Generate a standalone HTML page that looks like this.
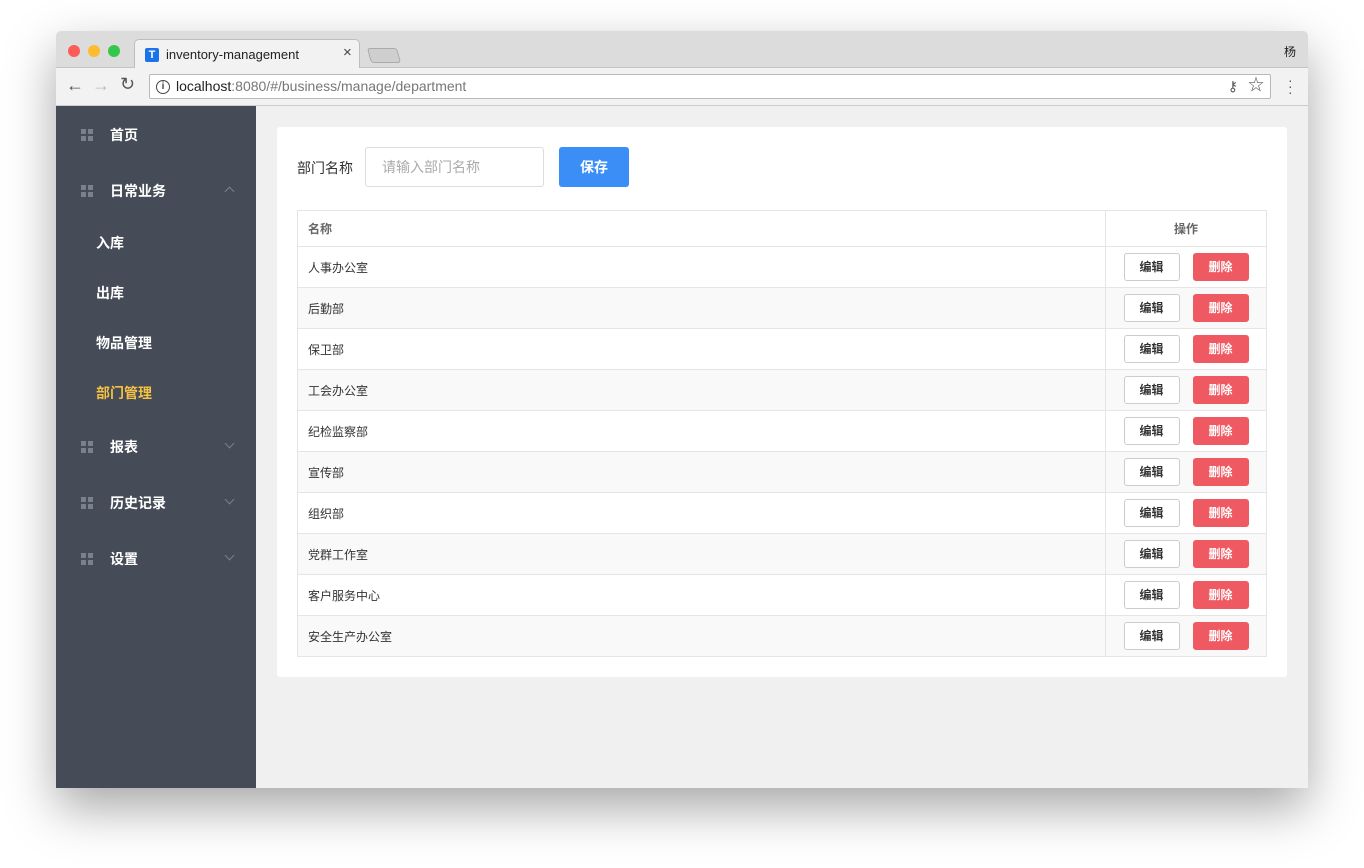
<!DOCTYPE html>
<html><head><meta charset="utf-8"><style>
*{margin:0;padding:0;box-sizing:border-box}
body{width:1364px;height:868px;background:#fff;font-family:"Liberation Sans","Noto Sans CJK SC",sans-serif;position:relative;overflow:hidden}
.win{position:absolute;left:56px;top:31px;width:1252px;height:757px;background:#f0f0f0;box-shadow:0 20px 50px rgba(0,0,0,.35);border-radius:5px 5px 0 0;overflow:hidden}
.title{position:absolute;left:0;top:0;width:100%;height:37px;background:#dcdcdc;border-bottom:1px solid #c4c4c4}
.dot{position:absolute;top:14px;width:12px;height:12px;border-radius:50%}
.tab{position:absolute;left:78px;top:8px;width:226px;height:30px;background:#f2f2f2;border:1px solid #bdbdbd;border-bottom:none;border-radius:5px 5px 0 0}
.tool{position:absolute;left:0;top:37px;width:100%;height:38px;background:#f2f2f2;border-bottom:1px solid #ccc}
.url{position:absolute;left:93px;top:6px;width:1122px;height:25px;background:#fff;border:1px solid #b8b8b8;border-radius:2px;font-size:14px;line-height:23px;padding-left:26px;color:#777}
.side{position:absolute;left:0;top:75px;width:200px;height:682px;background:#454c57}
.mi{position:absolute;left:0;width:200px;color:#fff;font-size:14px;font-weight:bold}
.ic{position:absolute;left:25px;width:12px;height:12px;background:
linear-gradient(#7b818a,#7b818a) 0 0/5px 5px no-repeat,linear-gradient(#7b818a,#7b818a) 7px 0/5px 5px no-repeat,linear-gradient(#7b818a,#7b818a) 0 7px/5px 5px no-repeat,linear-gradient(#7b818a,#7b818a) 7px 7px/5px 5px no-repeat}
.chev{position:absolute;left:170px;width:7px;height:7px;border-right:1px solid #7b818a;border-bottom:1px solid #7b818a}
.card{position:absolute;left:221px;top:96px;width:1010px;height:550px;background:#fff;border-radius:3px}
table{position:absolute;left:20px;top:83px;width:970px;border-collapse:collapse;font-size:12px;color:#333}
td{border:1px solid #e5e5e5;height:41px;padding-left:10px}
tr.h td{height:36px;color:#666;font-weight:bold}
tr:nth-child(odd):not(.h) td{background:#f9f9f9}
td.op{width:161px;padding:0;text-align:center}
.b{display:inline-block;width:56px;height:28px;line-height:26px;border-radius:3px;font-size:12px;font-weight:bold;vertical-align:middle}
.e{border:1px solid #ccc;background:#fff;color:#333;margin-right:13px}
.d{background:#ef5a62;color:#fff;border:1px solid #ef5a62}
</style></head><body>
<div class="win">
<div class="title">
<div class="dot" style="left:12px;background:#fc5b57"></div>
<div class="dot" style="left:32px;background:#fdbc2e"></div>
<div class="dot" style="left:52px;background:#34c84a"></div>
<div class="tab"></div>
<div style="position:absolute;left:89px;top:17px;width:14px;height:14px;background:#1a73e8;border-radius:2px;color:#fff;font-size:11px;font-weight:bold;text-align:center;line-height:14px">T</div>
<div style="position:absolute;left:110px;top:16px;font-size:13px;color:#222">inventory-management</div>
<div style="position:absolute;left:287px;top:13px;font-size:15px;color:#444">×</div>
<div style="position:absolute;left:313px;top:17px;width:30px;height:15px;background:#cfcfcf;border:1px solid #aaa;border-radius:3px;transform:skewX(15deg)"></div>
<div style="position:absolute;right:12px;top:12px;font-size:12px;color:#222">杨</div>
</div>
<div class="tool">
<div style="position:absolute;left:10px;top:7px;font-size:18px;color:#555">←</div>
<div style="position:absolute;left:36px;top:7px;font-size:18px;color:#bbb">→</div>
<div style="position:absolute;left:64px;top:6px;font-size:18px;color:#555">↻</div>
<div class="url"><span style="position:absolute;left:6px;top:5px;width:14px;height:14px;border:1.5px solid #444;border-radius:50%;font-size:10px;line-height:11px;text-align:center;color:#444;font-weight:bold">i</span><span style="color:#222">localhost</span>:8080/#/business/manage/department
<span style="position:absolute;right:32px;top:0;color:#555">⚷</span><span style="position:absolute;right:6px;top:-1px;color:#555;font-size:16px">☆</span></div>
<div style="position:absolute;left:1232px;top:9px;font-size:14px;color:#555;line-height:6px">·<br>·<br>·</div>
</div>
<div class="side">
<div class="mi" style="top:19px"><div class="ic" style="top:4px"></div><span style="position:absolute;left:54px">首页</span></div>
<div class="mi" style="top:75px"><div class="ic" style="top:4px"></div><span style="position:absolute;left:54px">日常业务</span><div class="chev" style="top:7px;transform:rotate(-135deg)"></div></div>
<div class="mi" style="top:127px"><span style="position:absolute;left:40px">入库</span></div>
<div class="mi" style="top:177px"><span style="position:absolute;left:40px">出库</span></div>
<div class="mi" style="top:227px"><span style="position:absolute;left:40px">物品管理</span></div>
<div class="mi" style="top:277px;color:#f5c143"><span style="position:absolute;left:40px">部门管理</span></div>
<div class="mi" style="top:331px"><div class="ic" style="top:4px"></div><span style="position:absolute;left:54px">报表</span><div class="chev" style="top:3px;transform:rotate(45deg)"></div></div>
<div class="mi" style="top:387px"><div class="ic" style="top:4px"></div><span style="position:absolute;left:54px">历史记录</span><div class="chev" style="top:3px;transform:rotate(45deg)"></div></div>
<div class="mi" style="top:443px"><div class="ic" style="top:4px"></div><span style="position:absolute;left:54px">设置</span><div class="chev" style="top:3px;transform:rotate(45deg)"></div></div>
</div>
<div class="card">
<div style="position:absolute;left:20px;top:31px;font-size:14px;color:#333">部门名称</div>
<div style="position:absolute;left:88px;top:20px;width:179px;height:40px;border:1px solid #ddd;border-radius:3px;font-size:14px;color:#aaa;line-height:38px;padding-left:16px">请输入部门名称</div>
<div style="position:absolute;left:282px;top:20px;width:70px;height:40px;background:#3a8ef6;border-radius:3px;color:#fff;font-size:14px;font-weight:bold;text-align:center;line-height:40px">保存</div>
<table>
<tr class="h"><td>名称</td><td class="op">操作</td></tr>
<tr><td>人事办公室</td><td class="op"><span class="b e">编辑</span><span class="b d">删除</span></td></tr>
<tr><td>后勤部</td><td class="op"><span class="b e">编辑</span><span class="b d">删除</span></td></tr>
<tr><td>保卫部</td><td class="op"><span class="b e">编辑</span><span class="b d">删除</span></td></tr>
<tr><td>工会办公室</td><td class="op"><span class="b e">编辑</span><span class="b d">删除</span></td></tr>
<tr><td>纪检监察部</td><td class="op"><span class="b e">编辑</span><span class="b d">删除</span></td></tr>
<tr><td>宣传部</td><td class="op"><span class="b e">编辑</span><span class="b d">删除</span></td></tr>
<tr><td>组织部</td><td class="op"><span class="b e">编辑</span><span class="b d">删除</span></td></tr>
<tr><td>党群工作室</td><td class="op"><span class="b e">编辑</span><span class="b d">删除</span></td></tr>
<tr><td>客户服务中心</td><td class="op"><span class="b e">编辑</span><span class="b d">删除</span></td></tr>
<tr><td>安全生产办公室</td><td class="op"><span class="b e">编辑</span><span class="b d">删除</span></td></tr>
</table>
</div>
</div>
</body></html>
